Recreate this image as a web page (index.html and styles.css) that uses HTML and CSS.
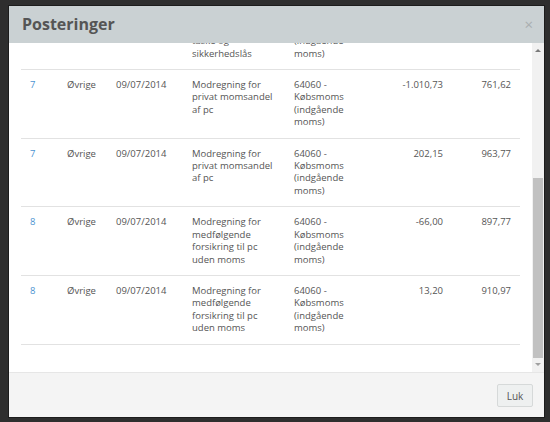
FILE: index.html
```html
<!DOCTYPE html>
<html lang="da">
<head>
<meta charset="utf-8">
<title>Posteringer</title>
<link rel="stylesheet" href="styles.css">
</head>
<body>
<div class="modal">
  <div class="modal-header">
    <h4 class="modal-title">Posteringer</h4>
    <span class="close">×</span>
  </div>
  <div class="modal-body">
    <div class="viewport">
      <table class="entries">
        <colgroup>
          <col class="c-no"><col class="c-type"><col class="c-date"><col class="c-text"><col class="c-acc"><col class="c-amt"><col class="c-bal">
        </colgroup>
        <tbody>
          <tr class="cut">
            <td></td>
            <td></td>
            <td></td>
            <td>Køb af bærbar<br>computer inkl.<br>taske og<br>sikkerhedslås</td>
            <td>64060 - Købsmoms (indgående moms)</td>
            <td></td>
            <td></td>
          </tr>
          <tr>
            <td><a>7</a></td>
            <td>Øvrige</td>
            <td>09/07/2014</td>
            <td>Modregning for privat momsandel af pc</td>
            <td>64060 - Købsmoms (indgående moms)</td>
            <td class="num">-1.010,73</td>
            <td class="num">761,62</td>
          </tr>
          <tr>
            <td><a>7</a></td>
            <td>Øvrige</td>
            <td>09/07/2014</td>
            <td>Modregning for privat momsandel af pc</td>
            <td>64060 - Købsmoms (indgående moms)</td>
            <td class="num">202,15</td>
            <td class="num">963,77</td>
          </tr>
          <tr>
            <td><a>8</a></td>
            <td>Øvrige</td>
            <td>09/07/2014</td>
            <td>Modregning for medfølgende forsikring til pc uden moms</td>
            <td>64060 - Købsmoms (indgående moms)</td>
            <td class="num">-66,00</td>
            <td class="num">897,77</td>
          </tr>
          <tr>
            <td><a>8</a></td>
            <td>Øvrige</td>
            <td>09/07/2014</td>
            <td>Modregning for medfølgende forsikring til pc uden moms</td>
            <td>64060 - Købsmoms (indgående moms)</td>
            <td class="num">13,20</td>
            <td class="num">910,97</td>
          </tr>
        </tbody>
      </table>
    </div>
    <div class="scrollbar">
      <svg class="arrow" width="12" height="14" viewBox="0 0 12 14"><path d="M3 9 L6 6 L9 9 Z" fill="#7a7a7a"/></svg>
      <div class="track"><div class="thumb"></div></div>
      <svg class="arrow" width="12" height="14" viewBox="0 0 12 14"><path d="M3 5 L6 8 L9 5 Z" fill="#a0a0a0"/></svg>
    </div>
  </div>
  <div class="modal-footer">
    <button class="btn">Luk</button>
  </div>
</div>
</body>
</html>
```

FILE: styles.css
```css
html, body {
  margin: 0;
  padding: 0;
}
body {
  background: #2e2e2e;
  width: 550px;
  height: 422px;
  padding: 6px 0 0 9px;
  box-sizing: border-box;
  font-family: "Open Sans", "DejaVu Sans", sans-serif;
  color: #555;
}
.modal {
  width: 535px;
  height: 411px;
  display: flex;
  flex-direction: column;
  background: #fff;
  box-shadow: 0 0 0 1px #1c1c1c;
}
.modal-header {
  height: 37px;
  background: #cad1d3;
  display: flex;
  align-items: center;
  justify-content: space-between;
  padding: 0 11px 0 13px;
  flex: none;
}
.modal-title {
  margin: 0;
  font-size: 16px;
  font-weight: 700;
  color: #555;
  line-height: 20px;
  padding-bottom: 1px;
}
.close {
  font-size: 15px;
  color: #a9aeb0;
  line-height: 16px;
  margin-bottom: 1px;
}
.modal-body {
  height: 329px;
  display: flex;
  flex: none;
}
.viewport {
  flex: 1;
  overflow: hidden;
  padding: 0 12px;
}
.entries {
  width: 499px;
  table-layout: fixed;
  border-collapse: collapse;
  margin-top: -41.6px;
  font-size: 9.5px;
  line-height: 12.4px;
}
.c-no { width: 37px; }
.c-type { width: 49px; }
.c-date { width: 76px; }
.c-text { width: 102px; }
.c-acc { width: 90px; }
.c-amt { width: 77px; }
.c-bal { width: 68px; }
.entries td {
  padding: 9px 9px;
  vertical-align: top;
  border-bottom: 1px solid #e2e2e2;
}
.entries td.num {
  text-align: right;
}
.entries a {
  color: #4b93d1;
}
.scrollbar {
  width: 12px;
  background: #f1f1f1;
  display: flex;
  flex-direction: column;
  flex: none;
}
.arrow {
  display: block;
  flex: none;
}
.track {
  flex: 1;
  display: flex;
  flex-direction: column;
  justify-content: flex-end;
  padding: 0 1px;
}
.thumb {
  height: 180px;
  background: #c1c1c1;
}
.modal-footer {
  flex: 1;
  background: #f4f4f4;
  border-top: 1px solid #e6e6e6;
  display: flex;
  justify-content: flex-end;
  align-items: flex-start;
  padding: 11px 11px 0 0;
}
.btn {
  width: 36px;
  height: 23px;
  padding: 0;
  background: #eef0f0;
  border: 1px solid #d6d9d9;
  border-radius: 2px;
  font-family: "Open Sans", "DejaVu Sans", sans-serif;
  font-size: 10px;
  color: #555;
}
```
